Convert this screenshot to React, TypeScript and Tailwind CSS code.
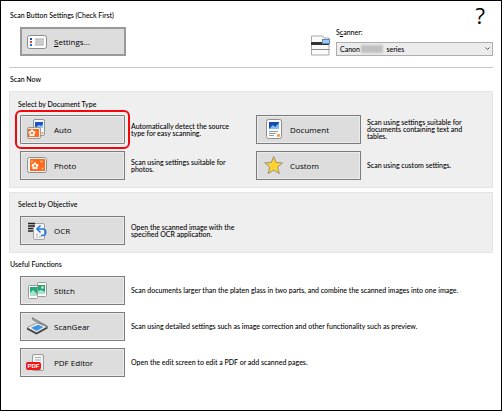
import type { ReactNode } from "react";

const SettingsIcon = () => (
  <svg width="22" height="21" viewBox="0 0 22 21" aria-hidden="true">
    <rect x="1.5" y="4.5" width="19" height="13" rx="2" fill="#fff" stroke="#8c8c8c" />
    <rect x="4" y="7" width="2" height="2" fill="#1b4fa0" />
    <rect x="4" y="10" width="2" height="2" fill="#e8432c" />
    <rect x="4" y="13" width="2" height="2" fill="#1b6fd0" />
    <rect x="9" y="7" width="9" height="8" fill="#d2d2d2" />
    <path d="M9 8.5h9M9 11h9M9 13.5h9" stroke="#bcbcbc" strokeWidth="0.8" />
  </svg>
);

const Flower = ({ x, y }: { x: number; y: number }) => (
  <g transform={`translate(${x} ${y})`} fill="#fff">
    <circle cx="0" cy="-2.2" r="1.3" />
    <circle cx="2.1" cy="-0.6" r="1.3" />
    <circle cx="1.3" cy="1.9" r="1.3" />
    <circle cx="-1.3" cy="1.9" r="1.3" />
    <circle cx="-2.1" cy="-0.6" r="1.3" />
    <circle r="0.7" fill="#f47b30" />
  </g>
);

const AutoIcon = () => (
  <svg width="22" height="21" viewBox="0 0 22 21" aria-hidden="true">
    <rect x="7.5" y="0.5" width="11" height="16" rx="1.5" fill="#f4f6f8" stroke="#8b939b" />
    <rect x="9" y="3" width="8" height="6" fill="#1d55c0" />
    <path d="M9 9l4-3 2 1 2-2v4z" fill="#8fc3f2" />
    <circle cx="16.5" cy="14" r="1" fill="#f7941d" />
    <rect x="1.5" y="8.5" width="13" height="11" rx="1.5" fill="#eee" stroke="#999" />
    <rect x="2" y="10" width="11" height="8" fill="#ff6a1c" />
    <Flower x={6} y={14} />
  </svg>
);

const PhotoIcon = () => (
  <svg width="22" height="21" viewBox="0 0 22 21" aria-hidden="true">
    <rect x="1.5" y="2.5" width="19" height="15" rx="2" fill="#f2f2f2" stroke="#8f8f8f" />
    <rect x="4" y="4" width="15" height="12" fill="#ff6a1c" />
    <Flower x={9} y={11} />
    <circle cx="6" cy="6.5" r="0.9" fill="#fbd0b0" />
    <circle cx="15.5" cy="6.5" r="0.9" fill="#fbd0b0" />
    <circle cx="16.5" cy="13.5" r="0.9" fill="#fbd0b0" />
  </svg>
);

const DocumentIcon = () => (
  <svg width="22" height="21" viewBox="0 0 22 21" aria-hidden="true">
    <rect x="4.5" y="0.5" width="15" height="19" rx="2" fill="#fbfbfb" stroke="#8f8f8f" />
    <rect x="7" y="3" width="10" height="7" fill="#164bb4" />
    <path d="M7 10l4-4 2 2 4-4v6z" fill="#7dbdf0" />
    <path d="M7 12.5h9M7 14.5h7M7 16.5h5" stroke="#9a9a9a" />
    <circle cx="16.5" cy="16.5" r="1.4" fill="#f7931e" />
  </svg>
);

const StarIcon = () => (
  <svg width="22" height="21" viewBox="0 0 22 21" aria-hidden="true">
    <path
      d="M11.7 1.5l2.4 6 6.5.4-5 4.2 1.7 6.5-5.6-3.6-5.6 3.6 1.7-6.5-5-4.2 6.5-.4z"
      fill="#ffd42e"
      stroke="#8d8a7c"
      strokeWidth="0.9"
      strokeLinejoin="round"
    />
  </svg>
);

const OcrIcon = () => (
  <svg width="22" height="21" viewBox="0 0 22 21" aria-hidden="true">
    <rect x="7.5" y="3.5" width="11" height="16" rx="1.5" fill="#f3f3f3" stroke="#a3a3a3" />
    <path d="M2 3.5h7M2 6h7M2 8.5h5M2 11h5" stroke="#222" strokeWidth="1.4" />
    <path d="M10 14.5h3M10 17h6" stroke="#aaa" strokeDasharray="2 1" />
    <path d="M12 9h4.5a3.2 3.2 0 0 1 0 6.5h-1.5" fill="none" stroke="#1b78e0" strokeWidth="1.5" />
    <path d="M14.5 5.5l-3.5 3.5 3.5 3.5" fill="none" stroke="#1b78e0" strokeWidth="1.5" />
  </svg>
);

const StitchIcon = () => (
  <svg width="22" height="21" viewBox="0 0 22 21" aria-hidden="true">
    <rect x="2.5" y="5.5" width="9" height="13" rx="1" fill="#fff" stroke="#9a9a9a" />
    <rect x="4" y="7" width="7" height="9" fill="#22a979" />
    <path d="M4 16v-3l3-3 4 4v2z" fill="#a8e3cd" />
    <rect x="11.5" y="2.5" width="9" height="14" rx="1" fill="#fff" stroke="#9a9a9a" />
    <rect x="12" y="5" width="7" height="9" fill="#22a979" />
    <path d="M12 14v-3l3-1 4 2v2z" fill="#a8e3cd" />
    <circle cx="16.5" cy="7.5" r="1.2" fill="#f5ee9a" />
  </svg>
);

const ScanGearIcon = () => (
  <svg width="22" height="21" viewBox="0 0 22 21" aria-hidden="true">
    <path d="M1 11.5v2l9.5 5 11-6v-2l-11 6z" fill="#3a3a3a" />
    <path d="M1 11.5l10-4.5 10.5 3.5-11 6z" fill="#f2f2f2" stroke="#777" strokeWidth="0.7" />
    <path d="M5 11.8l7-3 5.5 2.2-7 4z" fill="#3d94e6" />
    <path d="M6 1.5l14.5 8 1 1.5-14.5-7z" fill="#a9a9a9" stroke="#6c6c6c" strokeWidth="0.7" />
  </svg>
);

const PdfIcon = () => (
  <svg width="22" height="21" viewBox="0 0 22 21" aria-hidden="true">
    <rect x="6.5" y="2.5" width="11" height="16" rx="1.5" fill="#f4f4f4" stroke="#9a9a9a" />
    <path d="M9 5.5h6M9 8h6" stroke="#b0b0b0" />
    <rect x="0" y="10" width="15" height="8" rx="2" fill="#f01414" />
    <text
      x="7.5"
      y="16.3"
      textAnchor="middle"
      fill="#fff"
      fontSize="6"
      fontWeight="bold"
      fontFamily="Liberation Sans, sans-serif"
    >
      PDF
    </text>
  </svg>
);

const ScannerIcon = () => (
  <svg width="19" height="21" viewBox="0 0 19 21" aria-hidden="true">
    <path d="M.5 6.5v-5.5h11l1.5 2h5v17h-17.5z" fill="#fafafa" stroke="#a8a8a8" />
    <path d="M0 8.5h18" stroke="#333" strokeWidth="3" />
    <path d="M.5 14.5h18" stroke="#8d8d8d" />
    <rect x="11.5" y="4.5" width="7" height="4" fill="#9cc8f5" stroke="#5c86b4" />
  </svg>
);

type ActionProps = {
  icon: ReactNode;
  label: string;
  description: string;
  wide?: boolean;
  selected?: boolean;
};

const Action = ({ icon, label, description, wide, selected }: ActionProps) => (
  <div className="flex items-center gap-[6px]">
    <button
      className={`flex h-[29px] w-[105px] shrink-0 items-center gap-[6px] border border-[#7c7c7c] bg-[#dddddd] pl-[5px] text-left font-['Open_Sans',sans-serif] text-[8px] font-medium inset-ring inset-ring-[#ececec] ${
        selected ? "rounded-[1px] outline-2 outline-offset-3 outline-[#f5060d]" : ""
      }`}
    >
      {icon}
      {label}
    </button>
    <p className={wide ? "" : "max-w-[108px]"}>{description}</p>
  </div>
);

const App = () => (
  <main className="min-h-screen border border-black bg-white px-2 pt-2 font-[Lato,sans-serif] text-[7px] leading-[7px] font-medium text-black">
    <header className="flex justify-between border-b border-[#c8c8c8] pb-[11px]">
      <div>
        <h2 className="pl-[1px] leading-3">Scan Button Settings (Check First)</h2>
        <button className="mt-[6px] ml-[11px] flex h-[29px] w-[106px] items-center gap-[6px] border-2 border-[#9a9a9a] bg-[#dddddd] pl-1 text-left font-['Open_Sans',sans-serif] text-[8px] font-medium">
          <SettingsIcon />
          <span>
            <u>S</u>ettings...
          </span>
        </button>
      </div>
      <div className="flex flex-col items-end justify-between">
        <button aria-label="Help" className="mr-2 font-['Open_Sans',sans-serif] text-[22px] leading-3 font-normal">
          ?
        </button>
        <div className="flex items-end gap-[6px]">
          <ScannerIcon />
          <div className="w-[157px]">
            <label htmlFor="scanner" className="block pb-1 leading-3">
              S<u>c</u>anner:
            </label>
            <div className="relative">
              <select
                id="scanner"
                className="block h-[14px] w-full appearance-none border border-[#adadad] bg-[#ececec] pl-[3px] leading-3"
              >
                <option>{"Canon" + "\u00a0".repeat(15) + "series"}</option>
              </select>
              <span className="absolute top-[3px] left-[25px] h-2 w-[22px] bg-[#c0c0c0] blur-[1px]" />
              <svg className="absolute top-[5px] right-[3px]" width="5" height="4" viewBox="0 0 5 4" aria-hidden="true">
                <path d="M.5.5l2 2 2-2" fill="none" stroke="#555" />
              </svg>
            </div>
          </div>
        </div>
      </div>
    </header>

    <h2 className="mt-[5px] pl-[1px] leading-3">Scan Now</h2>

    <section className="mt-[6px] border border-[#e4e4e4] bg-[#efefef] pt-[6px] pb-[7px] pl-[10px]">
      <h3 className="-ml-[2px] leading-3">Select by Document Type</h3>
      <div className="mt-[5px] grid grid-cols-2 gap-y-[7px]">
        <Action
          icon={<AutoIcon />}
          label="Auto"
          description="Automatically detect the source type for easy scanning."
          selected
        />
        <Action
          icon={<DocumentIcon />}
          label="Document"
          description="Scan using settings suitable for documents containing text and tables."
        />
        <Action icon={<PhotoIcon />} label="Photo" description="Scan using settings suitable for photos." />
        <Action icon={<StarIcon />} label="Custom" description="Scan using custom settings." />
      </div>
    </section>

    <section className="mt-1 border border-[#e4e4e4] bg-[#efefef] pt-[5px] pb-[7px] pl-[10px]">
      <h3 className="-ml-[2px] leading-3">Select by Objective</h3>
      <div className="mt-[6px]">
        <Action
          icon={<OcrIcon />}
          label="OCR"
          description="Open the scanned image with the specified OCR application."
        />
      </div>
    </section>

    <h2 className="mt-[5px] pl-[1px] leading-3">Useful Functions</h2>
    <div className="mt-[6px] ml-[11px] flex flex-col gap-[7px]">
      <Action
        icon={<StitchIcon />}
        label="Stitch"
        description="Scan documents larger than the platen glass in two parts, and combine the scanned images into one image."
        wide
      />
      <Action
        icon={<ScanGearIcon />}
        label="ScanGear"
        description="Scan using detailed settings such as image correction and other functionality such as preview."
        wide
      />
      <Action
        icon={<PdfIcon />}
        label="PDF Editor"
        description="Open the edit screen to edit a PDF or add scanned pages."
        wide
      />
    </div>
  </main>
);

export default App;
